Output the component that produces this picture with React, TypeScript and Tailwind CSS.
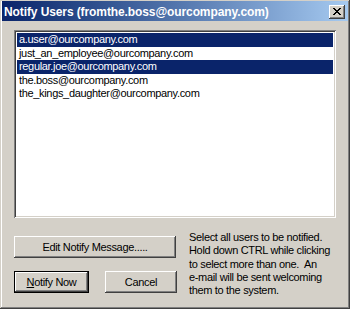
const USERS = [
  { email: "a.user@ourcompany.com", selected: true },
  { email: "just_an_employee@ourcompany.com", selected: false },
  { email: "regular.joe@ourcompany.com", selected: true },
  { email: "the.boss@ourcompany.com", selected: false },
  { email: "the_kings_daughter@ourcompany.com", selected: false },
];

const HELP = [
  "Select all users to be notified.",
  "Hold down CTRL while clicking",
  "to select more than one.  An",
  "e-mail will be sent welcoming",
  "them to the system.",
];

const raised =
  "bg-[#d4d0c8] shadow-[inset_-1px_-1px_#404040,inset_1px_1px_#ffffff,inset_-2px_-2px_#808080,inset_2px_2px_#d4d0c8]";

function CloseButton() {
  return (
    <div className={`flex h-[14px] w-[16px] items-center justify-center ${raised}`}>
      <svg width="8" height="7" viewBox="0 0 8 7" shapeRendering="crispEdges">
        <path
          d="M0 0h2v1H0zM6 0h2v1H6zM1 1h2v1H1zM5 1h2v1H5zM2 2h4v1H2zM3 3h2v1H3zM2 4h4v1H2zM1 5h2v1H1zM5 5h2v1H5zM0 6h2v1H0zM6 6h2v1H6z"
          fill="#000"
        />
      </svg>
    </div>
  );
}

function Button({ children, className = "", isDefault = false }: { children: React.ReactNode; className?: string; isDefault?: boolean }) {
  if (isDefault) {
    return (
      <div className={`h-[22px] border border-black ${className}`}>
        <div className={`flex h-full w-full items-center justify-center ${raised}`}>{children}</div>
      </div>
    );
  }
  return <div className={`flex h-[22px] items-center justify-center ${raised} ${className}`}>{children}</div>;
}

export default function App() {
  return (
    <div className="flex h-[309px] w-[350px] flex-col bg-[#d4d0c8] px-[2px] pt-[1px] font-['Liberation_Sans',Arial,sans-serif] text-[11px] tracking-[-0.33px] text-black shadow-[inset_-1px_-1px_#404040,inset_1px_1px_#d4d0c8,inset_-2px_-2px_#808080,inset_2px_2px_#ffffff]">
      <div className="flex h-[20px] items-center justify-between bg-gradient-to-r from-[#0a246a] to-[#a6caf0] pl-[2px] pr-[3px] pt-[1px]">
        <span className="text-[12px] font-bold tracking-[-0.1px] text-white">Notify Users (fromthe.boss@ourcompany.com)</span>
        <CloseButton />
      </div>

      <div className="flex flex-col px-[12px] pt-[9px]">
        <div className="h-[188px] w-[322px] bg-white p-[3px] shadow-[inset_1px_1px_#808080,inset_-1px_-1px_#ffffff,inset_2px_2px_#404040,inset_-2px_-2px_#d4d0c8]">
          <ul className="flex flex-col">
            {USERS.map((u) => (
              <li
                key={u.email}
                className={`h-[13.5px] pl-[2px] leading-[13.5px] ${u.selected ? "bg-[#0a246a] text-white" : ""}`}
              >
                {u.email}
              </li>
            ))}
          </ul>
        </div>

        <div className="flex">
          <div className="flex w-[163px] flex-col pt-[18px]">
            <Button className="w-[162px]">Edit Notify Message.....</Button>
            <div className="mt-[13px] flex gap-[16px]">
              <Button isDefault className="w-[75px]">
                <span>
                  <span className="underline">N</span>otify Now
                </span>
              </Button>
              <Button className="w-[72px]">Cancel</Button>
            </div>
          </div>
          <div className="ml-[12px] pt-[13px] leading-[13.3px] whitespace-pre">
            {HELP.map((line) => (
              <div key={line}>{line}</div>
            ))}
          </div>
        </div>
      </div>
    </div>
  );
}
